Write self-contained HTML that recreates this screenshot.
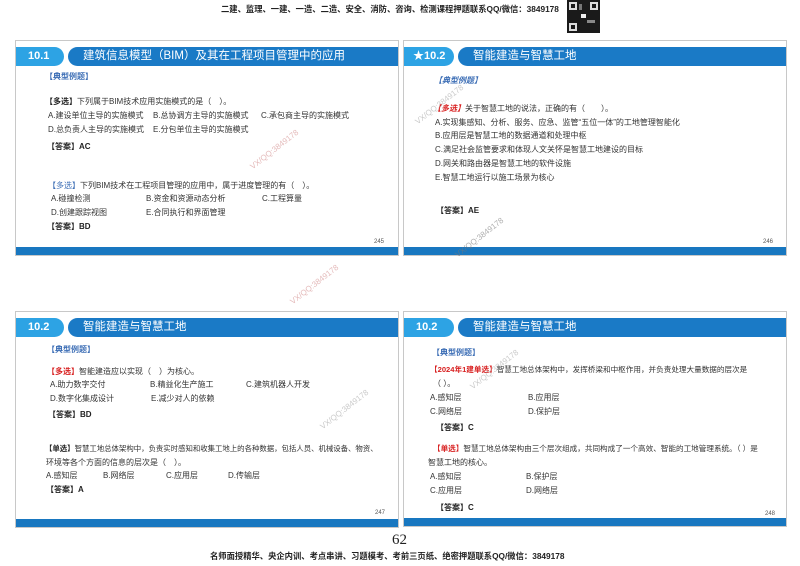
<!DOCTYPE html>
<html><head><meta charset="utf-8"><style>
*{margin:0;padding:0;box-sizing:border-box}
body{width:800px;height:566px;background:#fff;position:relative;overflow:hidden;font-family:"Liberation Sans","Noto Sans CJK SC",sans-serif;color:#333}
.p{position:absolute;border:1px solid #c8c8c8;background:#fff}
.bar{position:absolute;left:0;right:0;bottom:0;height:8px;background:#1877c0}
.tab{position:absolute;height:19px;background:#2da3e4;border-radius:0 10px 10px 0;color:#fff;font-weight:bold;font-size:11px;line-height:19px;padding-left:12px}
.hd{position:absolute;height:19px;background:#1a7ac6;border-radius:10px 0 0 10px;color:#fff;font-size:11.5px;line-height:19px;padding-left:15px;right:0}
.t{position:absolute;font-size:8px;line-height:9px;white-space:nowrap;color:#333}
.b{font-weight:bold;color:#222}
.bl{color:#3b6db5;font-weight:bold}
.r{color:#d82020;font-weight:bold}
.n{position:absolute;font-size:6px;color:#555}
.w{position:absolute;font-size:8px;color:rgba(210,140,140,.6);transform:rotate(-38deg);white-space:nowrap}
</style></head><body>
<div class="t b" style="left:221px;top:5px;font-size:8.3px;">二建、监理、一建、一造、二造、安全、消防、咨询、检测课程押题联系QQ/微信：3849178</div>
<div style="position:absolute;left:567px;top:0;width:33px;height:33px;background:#1a1a1a;">
<div style="position:absolute;left:2px;top:2px;width:8px;height:8px;border:2px solid #ddd"></div>
<div style="position:absolute;right:2px;top:2px;width:8px;height:8px;border:2px solid #ddd"></div>
<div style="position:absolute;left:2px;bottom:2px;width:8px;height:8px;border:2px solid #ddd"></div>
<div style="position:absolute;left:14px;top:14px;width:5px;height:4px;background:#eee"></div>
<div style="position:absolute;left:12px;top:4px;width:3px;height:6px;background:#777"></div>
<div style="position:absolute;left:20px;top:20px;width:8px;height:3px;background:#888"></div>
</div>

<!-- panel 1 -->
<div class="p" style="left:15px;top:40px;width:384px;height:216px;">
<div class="tab" style="left:0;top:6px;width:48px;">10.1</div>
<div class="hd" style="left:52px;top:6px;">建筑信息模型（BIM）及其在工程项目管理中的应用</div>
<div class="bar"></div>
</div>
<div class="t bl" style="left:45px;top:72px;">【典型例题】</div>
<div class="t" style="left:45px;top:97px;"><span class="b">【多选】</span>下列属于BIM技术应用实施模式的是（　）。</div>
<div class="t" style="left:48px;top:111px;">A.建设单位主导的实施模式</div>
<div class="t" style="left:153px;top:111px;">B.总协调方主导的实施模式</div>
<div class="t" style="left:261px;top:111px;">C.承包商主导的实施模式</div>
<div class="t" style="left:48px;top:125px;">D.总负责人主导的实施模式</div>
<div class="t" style="left:153px;top:125px;">E.分包单位主导的实施模式</div>
<div class="t b" style="left:47px;top:142px;">【答案】AC</div>
<div class="t" style="left:48px;top:181px;"><span class="bl" style="font-weight:normal">【多选】</span>下列BIM技术在工程项目管理的应用中，属于进度管理的有（　）。</div>
<div class="t" style="left:51px;top:194px;">A.碰撞检测</div>
<div class="t" style="left:146px;top:194px;">B.资金和资源动态分析</div>
<div class="t" style="left:262px;top:194px;">C.工程算量</div>
<div class="t" style="left:51px;top:208px;">D.创建跟踪视图</div>
<div class="t" style="left:146px;top:208px;">E.合同执行和界面管理</div>
<div class="t b" style="left:47px;top:222px;">【答案】BD</div>
<div class="n" style="left:374px;top:239px;">245</div>

<!-- panel 2 -->
<div class="p" style="left:403px;top:40px;width:384px;height:216px;">
<div class="tab" style="left:0;top:6px;width:50px;padding-left:9px;">★10.2</div>
<div class="hd" style="left:54px;top:6px;">智能建造与智慧工地</div>
<div class="bar"></div>
</div>
<div class="t bl" style="left:434px;top:76px;font-style:italic;">【典型例题】</div>
<div class="t" style="left:433px;top:104px;"><span class="r" style="font-style:italic">【多选】</span>关于智慧工地的说法，正确的有（　　）。</div>
<div class="t" style="left:435px;top:118px;">A.实现集感知、分析、服务、应急、监管“五位一体”的工地管理智能化</div>
<div class="t" style="left:435px;top:131px;">B.应用层是智慧工地的数据通道和处理中枢</div>
<div class="t" style="left:435px;top:145px;">C.满足社会监管要求和体现人文关怀是智慧工地建设的目标</div>
<div class="t" style="left:435px;top:159px;">D.网关和路由器是智慧工地的软件设施</div>
<div class="t" style="left:435px;top:173px;">E.智慧工地运行以施工场景为核心</div>
<div class="t b" style="left:436px;top:206px;">【答案】AE</div>
<div class="n" style="left:763px;top:239px;">246</div>

<!-- panel 3 -->
<div class="p" style="left:15px;top:311px;width:384px;height:217px;">
<div class="tab" style="left:0;top:6px;width:48px;">10.2</div>
<div class="hd" style="left:52px;top:6px;">智能建造与智慧工地</div>
<div class="bar"></div>
</div>
<div class="t bl" style="left:47px;top:345px;">【典型例题】</div>
<div class="t" style="left:47px;top:367px;"><span class="r">【多选】</span>智能建造应以实现（　）为核心。</div>
<div class="t" style="left:50px;top:380px;">A.助力数字交付</div>
<div class="t" style="left:150px;top:380px;">B.精益化生产施工</div>
<div class="t" style="left:246px;top:380px;">C.建筑机器人开发</div>
<div class="t" style="left:50px;top:394px;">D.数字化集成设计</div>
<div class="t" style="left:151px;top:394px;">E.减少对人的依赖</div>
<div class="t b" style="left:48px;top:410px;">【答案】BD</div>
<div class="t" style="left:45px;top:444px;font-size:7.4px;"><span class="b">【单选】</span>智慧工地总体架构中，负责实时感知和收集工地上的各种数据，包括人员、机械设备、物资、</div>
<div class="t" style="left:46px;top:458px;">环境等各个方面的信息的层次是（　）。</div>
<div class="t" style="left:46px;top:471px;">A.感知层</div>
<div class="t" style="left:103px;top:471px;">B.网络层</div>
<div class="t" style="left:166px;top:471px;">C.应用层</div>
<div class="t" style="left:228px;top:471px;">D.传输层</div>
<div class="t b" style="left:46px;top:485px;">【答案】A</div>
<div class="n" style="left:375px;top:510px;">247</div>

<!-- panel 4 -->
<div class="p" style="left:403px;top:311px;width:384px;height:216px;">
<div class="tab" style="left:0;top:6px;width:50px;">10.2</div>
<div class="hd" style="left:54px;top:6px;">智能建造与智慧工地</div>
<div class="bar"></div>
</div>
<div class="t bl" style="left:432px;top:348px;">【典型例题】</div>
<div class="t" style="left:430px;top:365px;font-size:7.6px;"><span class="r">【2024年1建单选】</span>智慧工地总体架构中，发挥桥梁和中枢作用，并负责处理大量数据的层次是</div>
<div class="t" style="left:433px;top:379px;">（ ）。</div>
<div class="t" style="left:430px;top:393px;">A.感知层</div>
<div class="t" style="left:528px;top:393px;">B.应用层</div>
<div class="t" style="left:430px;top:407px;">C.网络层</div>
<div class="t" style="left:528px;top:407px;">D.保护层</div>
<div class="t b" style="left:436px;top:423px;">【答案】C</div>
<div class="t" style="left:433px;top:444px;font-size:7.6px;"><span class="r">【单选】</span>智慧工地总体架构由三个层次组成，共同构成了一个高效、智能的工地管理系统。（ ）是</div>
<div class="t" style="left:428px;top:458px;">智慧工地的核心。</div>
<div class="t" style="left:430px;top:472px;">A.感知层</div>
<div class="t" style="left:526px;top:472px;">B.保护层</div>
<div class="t" style="left:430px;top:486px;">C.应用层</div>
<div class="t" style="left:526px;top:486px;">D.网络层</div>
<div class="t b" style="left:436px;top:503px;">【答案】C</div>
<div class="n" style="left:765px;top:511px;">248</div>

<div class="w" style="left:245px;top:145px;">VX/QQ:3849178</div>
<div class="w" style="left:410px;top:100px;color:rgba(150,150,150,.5)">VX/QQ:3849178</div>
<div class="w" style="left:450px;top:233px;color:rgba(120,120,120,.6)">VX/QQ:3849178</div>
<div class="w" style="left:285px;top:280px;">VX/QQ:3849178</div>
<div class="w" style="left:315px;top:405px;color:rgba(150,150,150,.5)">VX/QQ:3849178</div>
<div class="w" style="left:465px;top:365px;color:rgba(150,150,150,.5)">VX/QQ:3849178</div>

<div style="position:absolute;left:392px;top:532px;font-family:'Liberation Serif',serif;font-size:15px;color:#222">62</div>
<div class="t b" style="left:210px;top:552px;font-size:8.3px;">名师面授精华、央企内训、考点串讲、习题模考、考前三页纸、绝密押题联系QQ/微信：3849178</div>
</body></html>
